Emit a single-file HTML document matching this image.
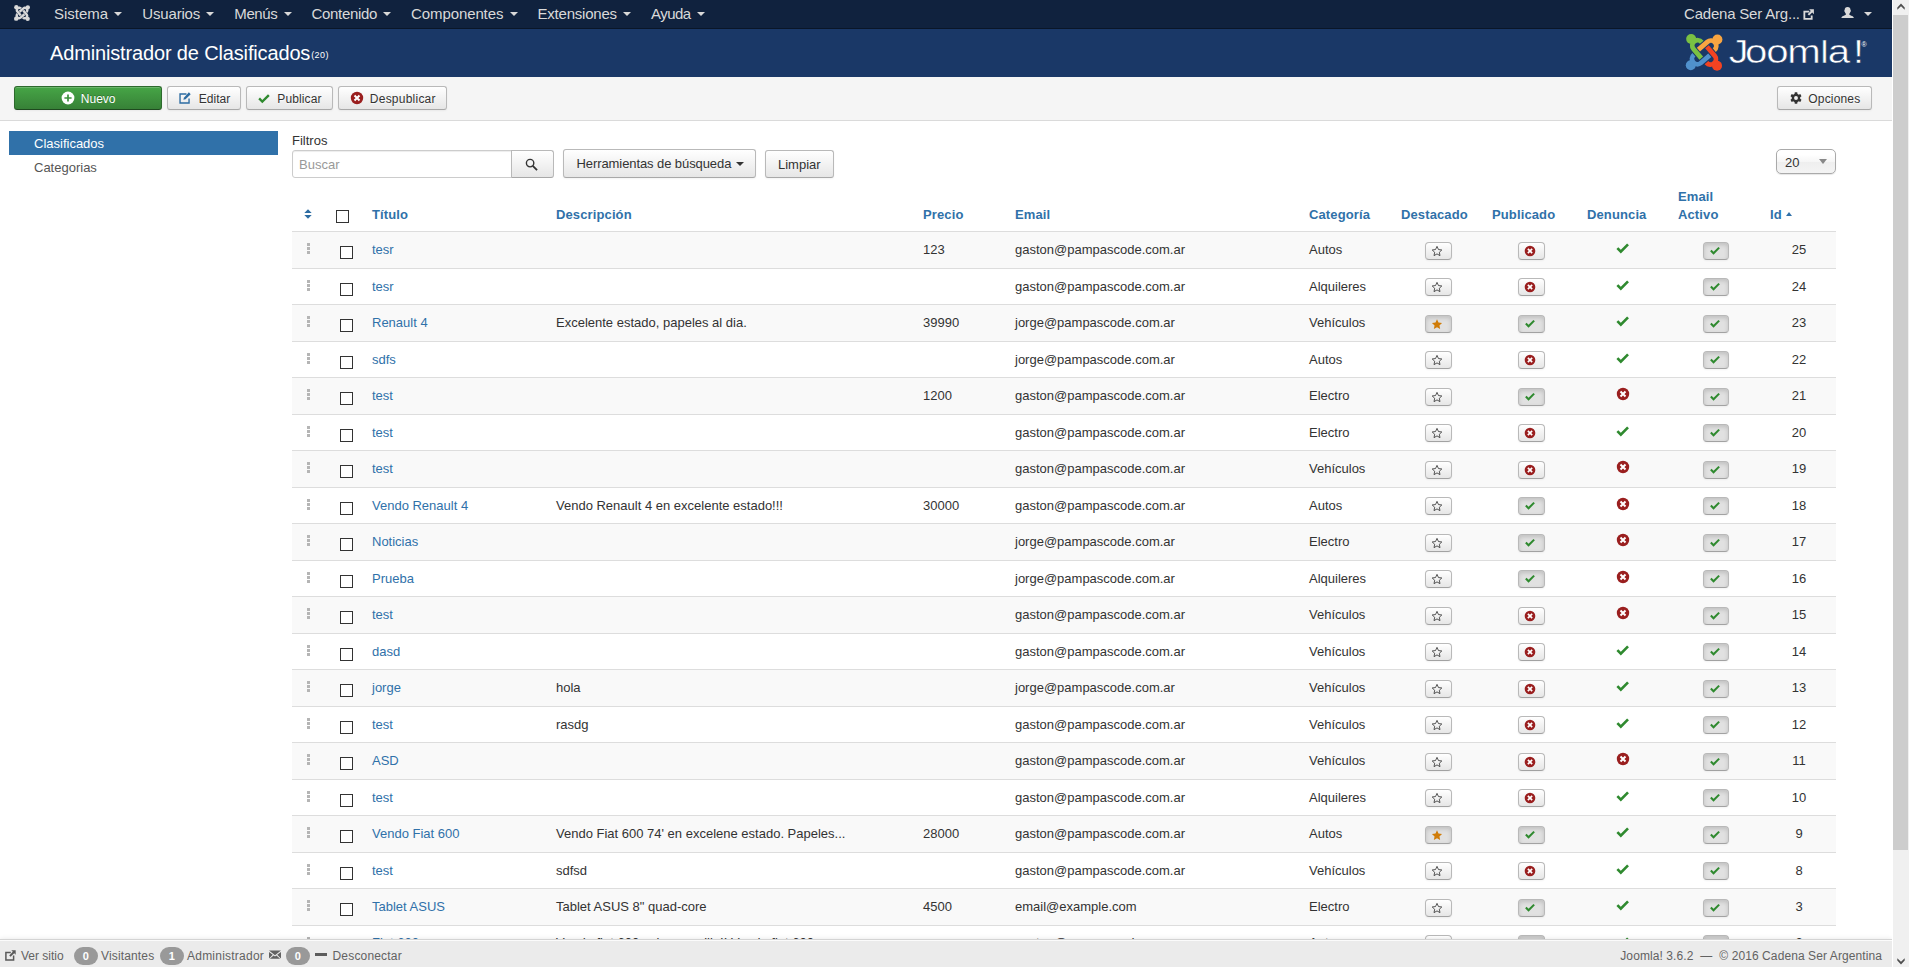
<!DOCTYPE html>
<html lang="es">
<head>
<meta charset="utf-8">
<title>Administrador de Clasificados - Cadena Ser Argentina - Administración</title>
<style>
*{box-sizing:border-box}
html,body{margin:0;padding:0}
body{width:1909px;height:967px;overflow:hidden;position:relative;background:#fff;font-family:"Liberation Sans",Arial,sans-serif;font-size:13px;line-height:18px;color:#333}
a{color:#3071a9;text-decoration:none}
svg{display:block}
#vp{position:absolute;left:0;top:0;width:1892px;height:967px;overflow:hidden;background:#fff}
/* navbar */
#nav{position:absolute;left:0;top:0;width:1892px;height:29px;background:#10223e;border-bottom:1px solid #0a1628;color:#d9d9d9;font-size:15px;line-height:18px}
#nav .logo{position:absolute;left:14px;top:5px;width:16px;height:16px}
#nav ul{list-style:none;margin:0;padding:0;position:absolute;left:44px;top:0;display:flex}
#nav li{padding:5px 10px 0 10px;white-space:nowrap}
#nav .car{display:inline-block;width:0;height:0;border-left:4px solid transparent;border-right:4px solid transparent;border-top:4px solid #d9d9d9;margin-left:2px;vertical-align:top;margin-top:7px}
#nav .site{position:absolute;left:1684px;top:5px;white-space:nowrap;letter-spacing:-0.2px}
#nav .ext{position:absolute;left:1802.8px;top:8.5px;width:11.5px;height:11px}
#nav .usr{position:absolute;left:1841px;top:6.6px;width:13.2px;height:11.8px}
#nav .car2{position:absolute;left:1864px;top:12px;width:0;height:0;border-left:4px solid transparent;border-right:4px solid transparent;border-top:4px solid #d9d9d9}
/* header */
#head{position:absolute;left:0;top:29px;width:1892px;height:48px;background:#1a3867;color:#fff}
#head h1{position:absolute;left:50px;top:6px;margin:0;font-size:20px;line-height:36px;font-weight:normal;white-space:nowrap}
#head h1 small{font-size:9px;font-weight:normal;letter-spacing:.4px;position:relative;top:-2px;margin-left:1px}
#head .jl{position:absolute;left:1685px;top:3px;width:186px;height:42px}
/* subhead */
#sub{position:absolute;left:0;top:77px;width:1892px;height:44px;background:#f5f5f5;border-bottom:1px solid #dadada}
.btn{position:absolute;height:24px;border:1px solid #b9b9b9;border-bottom-color:#a8a8a8;border-radius:3px;background:linear-gradient(#fff,#e6e6e6);font-size:12px;line-height:18px;padding:3px 10px 1px;color:#333;white-space:nowrap;box-shadow:inset 0 1px 0 rgba(255,255,255,.2),0 1px 2px rgba(0,0,0,.05);text-shadow:0 1px 1px rgba(255,255,255,.75)}
.btn .ic{display:inline-block;width:14px;height:14px;vertical-align:top;margin:1.3px 2.5px 0 .5px}
.btn.new .ic{margin-left:1px;margin-right:2px}
.btn.new{background:linear-gradient(#46a546,#378137);border-color:#2d6a2d;border-bottom-color:#1f4a1f;color:#fff;text-align:center;text-shadow:0 -1px 0 rgba(0,0,0,.25)}
/* sidebar */
#side{position:absolute;left:9px;top:131px;width:269px}
#side div{height:24px;padding:4px 25px 2px;color:#555}
#side div.on{background:#3071a9;color:#fff}
/* filters */
#flab{position:absolute;left:292px;top:132px}
#fin{position:absolute;left:292px;top:150px;width:220px;height:28px;border:1px solid #ccc;border-radius:3px 0 0 3px;background:#fff;box-shadow:inset 0 1px 1px rgba(0,0,0,.075);padding:5px 6px 3px;color:#999}
#fsb{position:absolute;left:511px;top:150px;width:43px;height:28px;border:1px solid #b9b9b9;border-bottom-color:#a8a8a8;border-radius:0 3px 3px 0;background:linear-gradient(#fff,#e6e6e6)}
#fsb svg{position:absolute;left:12.5px;top:7px;width:13px;height:13px}
.fb{position:absolute;top:150px;height:28px;border:1px solid #b9b9b9;border-bottom-color:#a8a8a8;border-radius:3px;background:linear-gradient(#fff,#e6e6e6);padding:5px 12px 3px;white-space:nowrap;box-shadow:0 1px 2px rgba(0,0,0,.05)}
.fb .car{display:inline-block;width:0;height:0;border-left:4px solid transparent;border-right:4px solid transparent;border-top:4px solid #333;vertical-align:top;margin:7px 0 0 1px}
#lim{position:absolute;left:1776px;top:149px;width:60px;height:25px;border:1px solid #aaa;border-radius:5px;background:linear-gradient(#fff 20%,#f6f6f6 50%,#eee 52%,#f4f4f4 100%);padding:4px 8px 0;box-shadow:0 1px 1px rgba(0,0,0,.1)}
#lim i{position:absolute;right:8.5px;top:9px;width:0;height:0;border-left:4px solid transparent;border-right:4px solid transparent;border-top:5.5px solid #888}
/* table */
#tb{position:absolute;left:292px;top:179px;width:1544px;border-collapse:collapse;table-layout:fixed}
#tb th{letter-spacing:.12px;padding:8px 8px 7px;text-align:left;vertical-align:bottom;font-weight:bold;color:#3071a9;height:52px;line-height:18px}
#tb td{padding:0 8px;height:36px;border-top:1px solid #ddd;vertical-align:top;white-space:nowrap;overflow:hidden}
#tb td{padding-top:9px}
#tb tbody tr:nth-child(odd) td{background:#f9f9f9;height:37px}
#tb td.ce{text-align:center}
#tb tbody tr:nth-child(even) .mb{margin-top:0}
#tb td.c11 .mb{width:26px}
#tb tbody tr:last-child td{padding-top:8px}
#tb tbody tr:last-child .mb{margin-top:1px}
#tb tbody tr:last-child .cb{margin-top:6px}
#tb tbody tr:last-child .hd{margin-top:3px}
#tb tbody tr:last-child .ic.big{margin-top:1px}
.cb{display:inline-block;width:13px;height:13px;border:1px solid #333;background:#fff;margin:5px 0 0 4px;vertical-align:top}
th .cb{margin:0 0 -4px 0;vertical-align:baseline}
.hd{display:inline-block;width:3px;margin:2px 0 0 7px;vertical-align:top}
.hd i{display:block;width:3px;height:3px;background:#b5b5b5;margin-bottom:1px}
.mb{display:inline-block;width:27px;height:18px;border:1px solid #b9b9b9;border-bottom-color:#a2a2a2;border-radius:4px;background:linear-gradient(#fff,#e6e6e6);box-shadow:0 1px 2px rgba(0,0,0,.05);vertical-align:top;margin-top:1px;position:relative}
.mb.act{background:#e1e1e1;box-shadow:inset 0 2px 4px rgba(0,0,0,.15),0 1px 2px rgba(0,0,0,.05)}
.mb .ic{position:absolute;left:5px;top:2px;width:12px;height:12px}
.ic.big{display:inline-block;width:14px;height:14px;vertical-align:top;margin:0 3px 0 0}
.ic.big.gr{width:15.4px;height:15.4px;margin:0 2.3px 0 -.7px}
.gr{color:#2f8a2f}.rd{color:#9a1f1f}.or{color:#d07c08}.dk{color:#333}.bl{color:#2d6ca2}
/* status */
#st{position:absolute;left:0;top:939px;width:1892px;height:28px;background:#ebebeb;border-top:1px solid #d4d4d4;color:#626262;font-size:12px;box-shadow:inset 0 1px 0 rgba(255,255,255,.8),0 0 5px rgba(0,0,0,.1)}
#st span{position:absolute;top:7px;white-space:nowrap}
#st .bd{top:7px;height:17.5px;min-width:22px;border-radius:9px;background:#999;color:#fff;font-size:11px;line-height:19px;overflow:hidden;text-align:center;padding:0 8.7px;font-weight:bold}
/* scrollbar */
#sb{position:absolute;left:1892px;top:0;width:17px;height:967px;background:#f0f0f0;border-left:1px solid #fff}
#sb .th{position:absolute;left:0;top:15px;width:15px;height:835px;background:#cdcdcd}
#sb svg{position:absolute;left:3.5px;width:8px;height:7px}
</style>
</head>
<body>
<div id="vp">
<div id="nav">
<svg class="logo" viewBox="5.4 3.3 37.4 37.4" style="overflow:visible"><g fill="#d9d9d9" stroke="#d9d9d9" stroke-width="5.8"><circle cx="10.9" cy="8.4" r="5.1" stroke="none"/><path d="M21.7 11.6 A5.1 5.1 0 1 0 13.3 18.6 L21.2 27.8" fill="none"/><g transform="rotate(90 24.1 22)"><circle cx="10.9" cy="8.4" r="5.1" stroke="none"/><path d="M21.7 11.6 A5.1 5.1 0 1 0 13.3 18.6 L21.2 27.8" fill="none"/></g><g transform="rotate(180 24.1 22)"><circle cx="10.9" cy="8.4" r="5.1" stroke="none"/><path d="M21.7 11.6 A5.1 5.1 0 1 0 13.3 18.6 L21.2 27.8" fill="none"/></g><g transform="rotate(270 24.1 22)"><circle cx="10.9" cy="8.4" r="5.1" stroke="none"/><path d="M21.7 11.6 A5.1 5.1 0 1 0 13.3 18.6 L21.2 27.8" fill="none"/></g></g></svg>
<ul><li><span style="letter-spacing:0px">Sistema</span> <span class="car"></span></li><li><span style="letter-spacing:-0.18px">Usuarios</span> <span class="car"></span></li><li><span style="letter-spacing:-0.38px">Menús</span> <span class="car"></span></li><li><span style="letter-spacing:-0.34px">Contenido</span> <span class="car"></span></li><li><span style="letter-spacing:-0.105px">Componentes</span> <span class="car"></span></li><li><span style="letter-spacing:-0.21px">Extensiones</span> <span class="car"></span></li><li><span style="letter-spacing:-0.54px">Ayuda</span> <span class="car"></span></li></ul>
<span class="site">Cadena Ser Arg...</span>
<svg class="ext" viewBox="0 0 12 12" style="color:#d9d9d9"><path d="M6.6 2.8 H1.2 V10.8 H9.2 V7.2" fill="none" stroke="currentColor" stroke-width="2"/><path d="M6.4 0.4 H11.6 V5.6 L9.8 3.8 L6.4 7.2 L4.8 5.6 L8.2 2.2 Z" fill="currentColor"/></svg>
<svg class="usr" viewBox="0 0 14 13" style="color:#d9d9d9"><path d="M7 0.1 C9.3 0.1 10.3 1.5 10.2 3.4 L10.6 3.6 L10.4 5.2 L10 5.4 C9.8 6.4 9.4 7 8.9 7.4 L8.9 8.4 C9.3 9 10.4 9.4 12.6 10.3 C13.5 10.8 13.9 11.6 14 12.9 L0 12.9 C0.1 11.6 0.5 10.8 1.4 10.3 C3.6 9.4 4.7 9 5.1 8.4 L5.1 7.4 C4.6 7 4.2 6.4 4 5.4 L3.6 5.2 L3.4 3.6 L3.8 3.4 C3.7 1.5 4.7 0.1 7 0.1 Z" fill="currentColor"/></svg>
<span class="car2"></span>
</div>
<div id="head">
<h1><span style="letter-spacing:-0.15px">Administrador de Clasificados</span><small>(20)</small></h1>
<svg class="jl" viewBox="0 0 186 42">
<g transform="translate(-5,-1.6) translate(24.1,22) scale(0.98) translate(-24.1,-22)" stroke-width="4.9"><g fill="#7ac143" stroke="#7ac143"><circle cx="10.9" cy="8.4" r="5.1" stroke="none"/><path d="M21.7 11.6 A5.1 5.1 0 1 0 13.3 18.6 L21.2 27.8" fill="none"/></g><g fill="#f9a541" stroke="#f9a541"><g transform="rotate(90 24.1 22)"><circle cx="10.9" cy="8.4" r="5.1" stroke="none"/><path d="M21.7 11.6 A5.1 5.1 0 1 0 13.3 18.6 L21.2 27.8" fill="none"/></g></g><g fill="#f44321" stroke="#f44321"><g transform="rotate(180 24.1 22)"><circle cx="10.9" cy="8.4" r="5.1" stroke="none"/><path d="M21.7 11.6 A5.1 5.1 0 1 0 13.3 18.6 L21.2 27.8" fill="none"/></g></g><g fill="#5091cd" stroke="#5091cd"><g transform="rotate(270 24.1 22)"><circle cx="10.9" cy="8.4" r="5.1" stroke="none"/><path d="M21.7 11.6 A5.1 5.1 0 1 0 13.3 18.6 L21.2 27.8" fill="none"/></g></g></g>
<text transform="scale(1.22,1)" x="35.9 49.1 66.6 83.8 110.8 117.1 137.8" y="31.1" font-family="Liberation Sans, sans-serif" font-size="33" fill="#fff" stroke="#1a3867" stroke-width="0.5"><tspan font-size="32.5">J</tspan>oom<tspan font-size="31">l</tspan>a<tspan font-size="32.5">!</tspan></text>
<text x="176.5" y="15" font-family="Liberation Sans, sans-serif" font-size="7" fill="#fff">®</text>
</svg>
</div>
<div id="sub">
<div class="btn new" style="left:14px;top:9px;width:148px"><svg class="ic" viewBox="0 0 14 14" style="color:#fff"><circle cx="7" cy="7" r="6.4" fill="currentColor"/><path d="M7 3.4 V10.6 M3.4 7 H10.6" stroke="#3d923d" stroke-width="1.7"/></svg> Nuevo</div>
<div class="btn" style="left:167px;top:9px;padding-left:10.5px"><svg class="ic bl" viewBox="0 0 14 14" style="margin-left:-.5px;margin-right:3.5px"><g transform="translate(7 7) scale(.92) translate(-7 -7)"><path d="M8.6 2.6 H1.6 V12.4 H11.4 V7.6" fill="none" stroke="currentColor" stroke-width="1.5"/><path d="M5.2 9 L5.8 6.6 L11.2 0.8 L13.2 2.8 L7.6 8.4 Z" fill="currentColor"/></g></svg> Editar</div>
<div class="btn" style="left:246px;top:9px"><svg class="ic gr" viewBox="0 0 14 14" style="margin-top:2.2px;margin-left:0;margin-right:3px"><path d="M1.3 7.3 L3 5.6 L5.3 7.9 L11 2.2 L12.7 3.9 L5.3 11.3 Z" fill="currentColor"/></svg> <span style="letter-spacing:.1px">Publicar</span></div>
<div class="btn" style="left:338px;top:9px;padding-left:10.5px"><svg class="ic rd" viewBox="0 0 14 14"><circle cx="7" cy="7" r="6.2" fill="currentColor"/><path d="M4.5 4.5 L9.5 9.5 M9.5 4.5 L4.5 9.5" stroke="#fff" stroke-width="2" stroke-linecap="butt"/></svg> <span style="letter-spacing:.23px">Despublicar</span></div>
<div class="btn" style="left:1777px;top:9px;padding-right:11px"><svg class="ic dk" viewBox="0 0 14 14"><g transform="translate(7 7) scale(.93) translate(-7 -7)"><g fill="currentColor"><rect x="5.5" y="0.9" width="3" height="3" rx="0.5" transform="rotate(0 7 7)"/><rect x="5.5" y="0.9" width="3" height="3" rx="0.5" transform="rotate(60 7 7)"/><rect x="5.5" y="0.9" width="3" height="3" rx="0.5" transform="rotate(120 7 7)"/><rect x="5.5" y="0.9" width="3" height="3" rx="0.5" transform="rotate(180 7 7)"/><rect x="5.5" y="0.9" width="3" height="3" rx="0.5" transform="rotate(240 7 7)"/><rect x="5.5" y="0.9" width="3" height="3" rx="0.5" transform="rotate(300 7 7)"/></g><circle cx="7" cy="7" r="3.35" fill="none" stroke="currentColor" stroke-width="2.5"/></g></svg> <span style="letter-spacing:.16px">Opciones</span></div>
</div>
<div id="side"><div class="on">Clasificados</div><div>Categorias</div></div>
<div id="flab">Filtros</div>
<div id="fin">Buscar</div>
<div id="fsb"><svg viewBox="0 0 14 14" class="dk"><circle cx="5.5" cy="5.5" r="4" fill="none" stroke="currentColor" stroke-width="1.5"/><path d="M8.4 8.4 L13 13" stroke="currentColor" stroke-width="2"/></svg></div>
<div class="fb" style="left:563px;top:149px;height:29px;padding-top:5px;padding-left:12.5px;padding-right:11.3px"><span style="letter-spacing:-0.085px">Herramientas de búsqueda</span> <span class="car"></span></div>
<div class="fb" style="left:765px">Limpiar</div>
<div id="lim">20<i></i></div>
<table id="tb">
<colgroup><col style="width:36px"><col style="width:36px"><col style="width:184px"><col style="width:367px"><col style="width:92px"><col style="width:294px"><col style="width:92px"><col style="width:91px"><col style="width:95px"><col style="width:91px"><col style="width:92px"><col style="width:74px"></colgroup>
<thead><tr>
<th><svg viewBox="0 0 8 10" style="width:8px;height:10px;margin:0 0 5px 4px" class="bl"><path d="M0.3 4 L4 0.2 L7.7 4 Z M0.3 6 L4 9.8 L7.7 6 Z" fill="currentColor"/></svg></th>
<th><span class="cb"></span></th>
<th>Título</th><th>Descripción</th><th>Precio</th><th>Email</th><th>Categoría</th><th>Destacado</th><th>Publicado</th><th>Denuncia</th><th>Email Activo</th><th>Id <span style="display:inline-block;width:0;height:0;border-left:3.5px solid transparent;border-right:3.5px solid transparent;border-bottom:4px solid #3071a9;vertical-align:top;margin-top:6px"></span></th>
</tr></thead>
<tbody>
<tr><td class="c1"><span class="hd"><i></i><i></i><i></i></span></td><td class="c2"><span class="cb"></span></td><td><a>tesr</a></td><td></td><td>123</td><td>gaston@pampascode.com.ar</td><td>Autos</td><td class="ce"><span class="mb"><svg class="ic dk" viewBox="0 0 14 14"><path d="M7 1.6 L8.7 5.3 L12.6 5.8 L9.7 8.5 L10.5 12.4 L7 10.4 L3.5 12.4 L4.3 8.5 L1.4 5.8 L5.3 5.3 Z" fill="none" stroke="currentColor" stroke-width="0.95"/></svg></span></td><td class="ce"><span class="mb"><svg class="ic rd" viewBox="0 0 14 14"><circle cx="7" cy="7" r="6.2" fill="currentColor"/><path d="M4.5 4.5 L9.5 9.5 M9.5 4.5 L4.5 9.5" stroke="#fff" stroke-width="2" stroke-linecap="butt"/></svg></span></td><td class="ce dn"><svg class="ic gr big" viewBox="0 0 14 14"><path d="M1.3 7.3 L3 5.6 L5.3 7.9 L11 2.2 L12.7 3.9 L5.3 11.3 Z" fill="currentColor"/></svg></td><td class="ce c11"><span class="mb act"><svg class="ic gr" viewBox="0 0 14 14"><path d="M1.3 7.3 L3 5.6 L5.3 7.9 L11 2.2 L12.7 3.9 L5.3 11.3 Z" fill="currentColor"/></svg></span></td><td class="ce">25</td></tr>
<tr><td class="c1"><span class="hd"><i></i><i></i><i></i></span></td><td class="c2"><span class="cb"></span></td><td><a>tesr</a></td><td></td><td></td><td>gaston@pampascode.com.ar</td><td>Alquileres</td><td class="ce"><span class="mb"><svg class="ic dk" viewBox="0 0 14 14"><path d="M7 1.6 L8.7 5.3 L12.6 5.8 L9.7 8.5 L10.5 12.4 L7 10.4 L3.5 12.4 L4.3 8.5 L1.4 5.8 L5.3 5.3 Z" fill="none" stroke="currentColor" stroke-width="0.95"/></svg></span></td><td class="ce"><span class="mb"><svg class="ic rd" viewBox="0 0 14 14"><circle cx="7" cy="7" r="6.2" fill="currentColor"/><path d="M4.5 4.5 L9.5 9.5 M9.5 4.5 L4.5 9.5" stroke="#fff" stroke-width="2" stroke-linecap="butt"/></svg></span></td><td class="ce dn"><svg class="ic gr big" viewBox="0 0 14 14"><path d="M1.3 7.3 L3 5.6 L5.3 7.9 L11 2.2 L12.7 3.9 L5.3 11.3 Z" fill="currentColor"/></svg></td><td class="ce c11"><span class="mb act"><svg class="ic gr" viewBox="0 0 14 14"><path d="M1.3 7.3 L3 5.6 L5.3 7.9 L11 2.2 L12.7 3.9 L5.3 11.3 Z" fill="currentColor"/></svg></span></td><td class="ce">24</td></tr>
<tr><td class="c1"><span class="hd"><i></i><i></i><i></i></span></td><td class="c2"><span class="cb"></span></td><td><a>Renault 4</a></td><td>Excelente estado, papeles al dia.</td><td>39990</td><td>jorge@pampascode.com.ar</td><td>Vehículos</td><td class="ce"><span class="mb act"><svg class="ic or" viewBox="0 0 14 14"><path transform="translate(7 7.3) scale(0.92) translate(-7 -7)" d="M7 0.8 L8.9 4.9 L13.4 5.4 L10.1 8.5 L11 13 L7 10.7 L3 13 L3.9 8.5 L0.6 5.4 L5.1 4.9 Z" fill="currentColor"/></svg></span></td><td class="ce"><span class="mb act"><svg class="ic gr" viewBox="0 0 14 14"><path d="M1.3 7.3 L3 5.6 L5.3 7.9 L11 2.2 L12.7 3.9 L5.3 11.3 Z" fill="currentColor"/></svg></span></td><td class="ce dn"><svg class="ic gr big" viewBox="0 0 14 14"><path d="M1.3 7.3 L3 5.6 L5.3 7.9 L11 2.2 L12.7 3.9 L5.3 11.3 Z" fill="currentColor"/></svg></td><td class="ce c11"><span class="mb act"><svg class="ic gr" viewBox="0 0 14 14"><path d="M1.3 7.3 L3 5.6 L5.3 7.9 L11 2.2 L12.7 3.9 L5.3 11.3 Z" fill="currentColor"/></svg></span></td><td class="ce">23</td></tr>
<tr><td class="c1"><span class="hd"><i></i><i></i><i></i></span></td><td class="c2"><span class="cb"></span></td><td><a>sdfs</a></td><td></td><td></td><td>jorge@pampascode.com.ar</td><td>Autos</td><td class="ce"><span class="mb"><svg class="ic dk" viewBox="0 0 14 14"><path d="M7 1.6 L8.7 5.3 L12.6 5.8 L9.7 8.5 L10.5 12.4 L7 10.4 L3.5 12.4 L4.3 8.5 L1.4 5.8 L5.3 5.3 Z" fill="none" stroke="currentColor" stroke-width="0.95"/></svg></span></td><td class="ce"><span class="mb"><svg class="ic rd" viewBox="0 0 14 14"><circle cx="7" cy="7" r="6.2" fill="currentColor"/><path d="M4.5 4.5 L9.5 9.5 M9.5 4.5 L4.5 9.5" stroke="#fff" stroke-width="2" stroke-linecap="butt"/></svg></span></td><td class="ce dn"><svg class="ic gr big" viewBox="0 0 14 14"><path d="M1.3 7.3 L3 5.6 L5.3 7.9 L11 2.2 L12.7 3.9 L5.3 11.3 Z" fill="currentColor"/></svg></td><td class="ce c11"><span class="mb act"><svg class="ic gr" viewBox="0 0 14 14"><path d="M1.3 7.3 L3 5.6 L5.3 7.9 L11 2.2 L12.7 3.9 L5.3 11.3 Z" fill="currentColor"/></svg></span></td><td class="ce">22</td></tr>
<tr><td class="c1"><span class="hd"><i></i><i></i><i></i></span></td><td class="c2"><span class="cb"></span></td><td><a>test</a></td><td></td><td>1200</td><td>gaston@pampascode.com.ar</td><td>Electro</td><td class="ce"><span class="mb"><svg class="ic dk" viewBox="0 0 14 14"><path d="M7 1.6 L8.7 5.3 L12.6 5.8 L9.7 8.5 L10.5 12.4 L7 10.4 L3.5 12.4 L4.3 8.5 L1.4 5.8 L5.3 5.3 Z" fill="none" stroke="currentColor" stroke-width="0.95"/></svg></span></td><td class="ce"><span class="mb act"><svg class="ic gr" viewBox="0 0 14 14"><path d="M1.3 7.3 L3 5.6 L5.3 7.9 L11 2.2 L12.7 3.9 L5.3 11.3 Z" fill="currentColor"/></svg></span></td><td class="ce dn"><svg class="ic rd big" viewBox="0 0 14 14"><circle cx="7" cy="7" r="6.2" fill="currentColor"/><path d="M4.5 4.5 L9.5 9.5 M9.5 4.5 L4.5 9.5" stroke="#fff" stroke-width="2" stroke-linecap="butt"/></svg></td><td class="ce c11"><span class="mb act"><svg class="ic gr" viewBox="0 0 14 14"><path d="M1.3 7.3 L3 5.6 L5.3 7.9 L11 2.2 L12.7 3.9 L5.3 11.3 Z" fill="currentColor"/></svg></span></td><td class="ce">21</td></tr>
<tr><td class="c1"><span class="hd"><i></i><i></i><i></i></span></td><td class="c2"><span class="cb"></span></td><td><a>test</a></td><td></td><td></td><td>gaston@pampascode.com.ar</td><td>Electro</td><td class="ce"><span class="mb"><svg class="ic dk" viewBox="0 0 14 14"><path d="M7 1.6 L8.7 5.3 L12.6 5.8 L9.7 8.5 L10.5 12.4 L7 10.4 L3.5 12.4 L4.3 8.5 L1.4 5.8 L5.3 5.3 Z" fill="none" stroke="currentColor" stroke-width="0.95"/></svg></span></td><td class="ce"><span class="mb"><svg class="ic rd" viewBox="0 0 14 14"><circle cx="7" cy="7" r="6.2" fill="currentColor"/><path d="M4.5 4.5 L9.5 9.5 M9.5 4.5 L4.5 9.5" stroke="#fff" stroke-width="2" stroke-linecap="butt"/></svg></span></td><td class="ce dn"><svg class="ic gr big" viewBox="0 0 14 14"><path d="M1.3 7.3 L3 5.6 L5.3 7.9 L11 2.2 L12.7 3.9 L5.3 11.3 Z" fill="currentColor"/></svg></td><td class="ce c11"><span class="mb act"><svg class="ic gr" viewBox="0 0 14 14"><path d="M1.3 7.3 L3 5.6 L5.3 7.9 L11 2.2 L12.7 3.9 L5.3 11.3 Z" fill="currentColor"/></svg></span></td><td class="ce">20</td></tr>
<tr><td class="c1"><span class="hd"><i></i><i></i><i></i></span></td><td class="c2"><span class="cb"></span></td><td><a>test</a></td><td></td><td></td><td>gaston@pampascode.com.ar</td><td>Vehículos</td><td class="ce"><span class="mb"><svg class="ic dk" viewBox="0 0 14 14"><path d="M7 1.6 L8.7 5.3 L12.6 5.8 L9.7 8.5 L10.5 12.4 L7 10.4 L3.5 12.4 L4.3 8.5 L1.4 5.8 L5.3 5.3 Z" fill="none" stroke="currentColor" stroke-width="0.95"/></svg></span></td><td class="ce"><span class="mb"><svg class="ic rd" viewBox="0 0 14 14"><circle cx="7" cy="7" r="6.2" fill="currentColor"/><path d="M4.5 4.5 L9.5 9.5 M9.5 4.5 L4.5 9.5" stroke="#fff" stroke-width="2" stroke-linecap="butt"/></svg></span></td><td class="ce dn"><svg class="ic rd big" viewBox="0 0 14 14"><circle cx="7" cy="7" r="6.2" fill="currentColor"/><path d="M4.5 4.5 L9.5 9.5 M9.5 4.5 L4.5 9.5" stroke="#fff" stroke-width="2" stroke-linecap="butt"/></svg></td><td class="ce c11"><span class="mb act"><svg class="ic gr" viewBox="0 0 14 14"><path d="M1.3 7.3 L3 5.6 L5.3 7.9 L11 2.2 L12.7 3.9 L5.3 11.3 Z" fill="currentColor"/></svg></span></td><td class="ce">19</td></tr>
<tr><td class="c1"><span class="hd"><i></i><i></i><i></i></span></td><td class="c2"><span class="cb"></span></td><td><a>Vendo Renault 4</a></td><td>Vendo Renault 4 en excelente estado!!!</td><td>30000</td><td>gaston@pampascode.com.ar</td><td>Autos</td><td class="ce"><span class="mb"><svg class="ic dk" viewBox="0 0 14 14"><path d="M7 1.6 L8.7 5.3 L12.6 5.8 L9.7 8.5 L10.5 12.4 L7 10.4 L3.5 12.4 L4.3 8.5 L1.4 5.8 L5.3 5.3 Z" fill="none" stroke="currentColor" stroke-width="0.95"/></svg></span></td><td class="ce"><span class="mb act"><svg class="ic gr" viewBox="0 0 14 14"><path d="M1.3 7.3 L3 5.6 L5.3 7.9 L11 2.2 L12.7 3.9 L5.3 11.3 Z" fill="currentColor"/></svg></span></td><td class="ce dn"><svg class="ic rd big" viewBox="0 0 14 14"><circle cx="7" cy="7" r="6.2" fill="currentColor"/><path d="M4.5 4.5 L9.5 9.5 M9.5 4.5 L4.5 9.5" stroke="#fff" stroke-width="2" stroke-linecap="butt"/></svg></td><td class="ce c11"><span class="mb act"><svg class="ic gr" viewBox="0 0 14 14"><path d="M1.3 7.3 L3 5.6 L5.3 7.9 L11 2.2 L12.7 3.9 L5.3 11.3 Z" fill="currentColor"/></svg></span></td><td class="ce">18</td></tr>
<tr><td class="c1"><span class="hd"><i></i><i></i><i></i></span></td><td class="c2"><span class="cb"></span></td><td><a>Noticias</a></td><td></td><td></td><td>jorge@pampascode.com.ar</td><td>Electro</td><td class="ce"><span class="mb"><svg class="ic dk" viewBox="0 0 14 14"><path d="M7 1.6 L8.7 5.3 L12.6 5.8 L9.7 8.5 L10.5 12.4 L7 10.4 L3.5 12.4 L4.3 8.5 L1.4 5.8 L5.3 5.3 Z" fill="none" stroke="currentColor" stroke-width="0.95"/></svg></span></td><td class="ce"><span class="mb act"><svg class="ic gr" viewBox="0 0 14 14"><path d="M1.3 7.3 L3 5.6 L5.3 7.9 L11 2.2 L12.7 3.9 L5.3 11.3 Z" fill="currentColor"/></svg></span></td><td class="ce dn"><svg class="ic rd big" viewBox="0 0 14 14"><circle cx="7" cy="7" r="6.2" fill="currentColor"/><path d="M4.5 4.5 L9.5 9.5 M9.5 4.5 L4.5 9.5" stroke="#fff" stroke-width="2" stroke-linecap="butt"/></svg></td><td class="ce c11"><span class="mb act"><svg class="ic gr" viewBox="0 0 14 14"><path d="M1.3 7.3 L3 5.6 L5.3 7.9 L11 2.2 L12.7 3.9 L5.3 11.3 Z" fill="currentColor"/></svg></span></td><td class="ce">17</td></tr>
<tr><td class="c1"><span class="hd"><i></i><i></i><i></i></span></td><td class="c2"><span class="cb"></span></td><td><a>Prueba</a></td><td></td><td></td><td>jorge@pampascode.com.ar</td><td>Alquileres</td><td class="ce"><span class="mb"><svg class="ic dk" viewBox="0 0 14 14"><path d="M7 1.6 L8.7 5.3 L12.6 5.8 L9.7 8.5 L10.5 12.4 L7 10.4 L3.5 12.4 L4.3 8.5 L1.4 5.8 L5.3 5.3 Z" fill="none" stroke="currentColor" stroke-width="0.95"/></svg></span></td><td class="ce"><span class="mb act"><svg class="ic gr" viewBox="0 0 14 14"><path d="M1.3 7.3 L3 5.6 L5.3 7.9 L11 2.2 L12.7 3.9 L5.3 11.3 Z" fill="currentColor"/></svg></span></td><td class="ce dn"><svg class="ic rd big" viewBox="0 0 14 14"><circle cx="7" cy="7" r="6.2" fill="currentColor"/><path d="M4.5 4.5 L9.5 9.5 M9.5 4.5 L4.5 9.5" stroke="#fff" stroke-width="2" stroke-linecap="butt"/></svg></td><td class="ce c11"><span class="mb act"><svg class="ic gr" viewBox="0 0 14 14"><path d="M1.3 7.3 L3 5.6 L5.3 7.9 L11 2.2 L12.7 3.9 L5.3 11.3 Z" fill="currentColor"/></svg></span></td><td class="ce">16</td></tr>
<tr><td class="c1"><span class="hd"><i></i><i></i><i></i></span></td><td class="c2"><span class="cb"></span></td><td><a>test</a></td><td></td><td></td><td>gaston@pampascode.com.ar</td><td>Vehículos</td><td class="ce"><span class="mb"><svg class="ic dk" viewBox="0 0 14 14"><path d="M7 1.6 L8.7 5.3 L12.6 5.8 L9.7 8.5 L10.5 12.4 L7 10.4 L3.5 12.4 L4.3 8.5 L1.4 5.8 L5.3 5.3 Z" fill="none" stroke="currentColor" stroke-width="0.95"/></svg></span></td><td class="ce"><span class="mb"><svg class="ic rd" viewBox="0 0 14 14"><circle cx="7" cy="7" r="6.2" fill="currentColor"/><path d="M4.5 4.5 L9.5 9.5 M9.5 4.5 L4.5 9.5" stroke="#fff" stroke-width="2" stroke-linecap="butt"/></svg></span></td><td class="ce dn"><svg class="ic rd big" viewBox="0 0 14 14"><circle cx="7" cy="7" r="6.2" fill="currentColor"/><path d="M4.5 4.5 L9.5 9.5 M9.5 4.5 L4.5 9.5" stroke="#fff" stroke-width="2" stroke-linecap="butt"/></svg></td><td class="ce c11"><span class="mb act"><svg class="ic gr" viewBox="0 0 14 14"><path d="M1.3 7.3 L3 5.6 L5.3 7.9 L11 2.2 L12.7 3.9 L5.3 11.3 Z" fill="currentColor"/></svg></span></td><td class="ce">15</td></tr>
<tr><td class="c1"><span class="hd"><i></i><i></i><i></i></span></td><td class="c2"><span class="cb"></span></td><td><a>dasd</a></td><td></td><td></td><td>gaston@pampascode.com.ar</td><td>Vehículos</td><td class="ce"><span class="mb"><svg class="ic dk" viewBox="0 0 14 14"><path d="M7 1.6 L8.7 5.3 L12.6 5.8 L9.7 8.5 L10.5 12.4 L7 10.4 L3.5 12.4 L4.3 8.5 L1.4 5.8 L5.3 5.3 Z" fill="none" stroke="currentColor" stroke-width="0.95"/></svg></span></td><td class="ce"><span class="mb"><svg class="ic rd" viewBox="0 0 14 14"><circle cx="7" cy="7" r="6.2" fill="currentColor"/><path d="M4.5 4.5 L9.5 9.5 M9.5 4.5 L4.5 9.5" stroke="#fff" stroke-width="2" stroke-linecap="butt"/></svg></span></td><td class="ce dn"><svg class="ic gr big" viewBox="0 0 14 14"><path d="M1.3 7.3 L3 5.6 L5.3 7.9 L11 2.2 L12.7 3.9 L5.3 11.3 Z" fill="currentColor"/></svg></td><td class="ce c11"><span class="mb act"><svg class="ic gr" viewBox="0 0 14 14"><path d="M1.3 7.3 L3 5.6 L5.3 7.9 L11 2.2 L12.7 3.9 L5.3 11.3 Z" fill="currentColor"/></svg></span></td><td class="ce">14</td></tr>
<tr><td class="c1"><span class="hd"><i></i><i></i><i></i></span></td><td class="c2"><span class="cb"></span></td><td><a>jorge</a></td><td>hola</td><td></td><td>jorge@pampascode.com.ar</td><td>Vehículos</td><td class="ce"><span class="mb"><svg class="ic dk" viewBox="0 0 14 14"><path d="M7 1.6 L8.7 5.3 L12.6 5.8 L9.7 8.5 L10.5 12.4 L7 10.4 L3.5 12.4 L4.3 8.5 L1.4 5.8 L5.3 5.3 Z" fill="none" stroke="currentColor" stroke-width="0.95"/></svg></span></td><td class="ce"><span class="mb"><svg class="ic rd" viewBox="0 0 14 14"><circle cx="7" cy="7" r="6.2" fill="currentColor"/><path d="M4.5 4.5 L9.5 9.5 M9.5 4.5 L4.5 9.5" stroke="#fff" stroke-width="2" stroke-linecap="butt"/></svg></span></td><td class="ce dn"><svg class="ic gr big" viewBox="0 0 14 14"><path d="M1.3 7.3 L3 5.6 L5.3 7.9 L11 2.2 L12.7 3.9 L5.3 11.3 Z" fill="currentColor"/></svg></td><td class="ce c11"><span class="mb act"><svg class="ic gr" viewBox="0 0 14 14"><path d="M1.3 7.3 L3 5.6 L5.3 7.9 L11 2.2 L12.7 3.9 L5.3 11.3 Z" fill="currentColor"/></svg></span></td><td class="ce">13</td></tr>
<tr><td class="c1"><span class="hd"><i></i><i></i><i></i></span></td><td class="c2"><span class="cb"></span></td><td><a>test</a></td><td>rasdg</td><td></td><td>gaston@pampascode.com.ar</td><td>Vehículos</td><td class="ce"><span class="mb"><svg class="ic dk" viewBox="0 0 14 14"><path d="M7 1.6 L8.7 5.3 L12.6 5.8 L9.7 8.5 L10.5 12.4 L7 10.4 L3.5 12.4 L4.3 8.5 L1.4 5.8 L5.3 5.3 Z" fill="none" stroke="currentColor" stroke-width="0.95"/></svg></span></td><td class="ce"><span class="mb"><svg class="ic rd" viewBox="0 0 14 14"><circle cx="7" cy="7" r="6.2" fill="currentColor"/><path d="M4.5 4.5 L9.5 9.5 M9.5 4.5 L4.5 9.5" stroke="#fff" stroke-width="2" stroke-linecap="butt"/></svg></span></td><td class="ce dn"><svg class="ic gr big" viewBox="0 0 14 14"><path d="M1.3 7.3 L3 5.6 L5.3 7.9 L11 2.2 L12.7 3.9 L5.3 11.3 Z" fill="currentColor"/></svg></td><td class="ce c11"><span class="mb act"><svg class="ic gr" viewBox="0 0 14 14"><path d="M1.3 7.3 L3 5.6 L5.3 7.9 L11 2.2 L12.7 3.9 L5.3 11.3 Z" fill="currentColor"/></svg></span></td><td class="ce">12</td></tr>
<tr><td class="c1"><span class="hd"><i></i><i></i><i></i></span></td><td class="c2"><span class="cb"></span></td><td><a>ASD</a></td><td></td><td></td><td>gaston@pampascode.com.ar</td><td>Vehículos</td><td class="ce"><span class="mb"><svg class="ic dk" viewBox="0 0 14 14"><path d="M7 1.6 L8.7 5.3 L12.6 5.8 L9.7 8.5 L10.5 12.4 L7 10.4 L3.5 12.4 L4.3 8.5 L1.4 5.8 L5.3 5.3 Z" fill="none" stroke="currentColor" stroke-width="0.95"/></svg></span></td><td class="ce"><span class="mb"><svg class="ic rd" viewBox="0 0 14 14"><circle cx="7" cy="7" r="6.2" fill="currentColor"/><path d="M4.5 4.5 L9.5 9.5 M9.5 4.5 L4.5 9.5" stroke="#fff" stroke-width="2" stroke-linecap="butt"/></svg></span></td><td class="ce dn"><svg class="ic rd big" viewBox="0 0 14 14"><circle cx="7" cy="7" r="6.2" fill="currentColor"/><path d="M4.5 4.5 L9.5 9.5 M9.5 4.5 L4.5 9.5" stroke="#fff" stroke-width="2" stroke-linecap="butt"/></svg></td><td class="ce c11"><span class="mb act"><svg class="ic gr" viewBox="0 0 14 14"><path d="M1.3 7.3 L3 5.6 L5.3 7.9 L11 2.2 L12.7 3.9 L5.3 11.3 Z" fill="currentColor"/></svg></span></td><td class="ce">11</td></tr>
<tr><td class="c1"><span class="hd"><i></i><i></i><i></i></span></td><td class="c2"><span class="cb"></span></td><td><a>test</a></td><td></td><td></td><td>gaston@pampascode.com.ar</td><td>Alquileres</td><td class="ce"><span class="mb"><svg class="ic dk" viewBox="0 0 14 14"><path d="M7 1.6 L8.7 5.3 L12.6 5.8 L9.7 8.5 L10.5 12.4 L7 10.4 L3.5 12.4 L4.3 8.5 L1.4 5.8 L5.3 5.3 Z" fill="none" stroke="currentColor" stroke-width="0.95"/></svg></span></td><td class="ce"><span class="mb"><svg class="ic rd" viewBox="0 0 14 14"><circle cx="7" cy="7" r="6.2" fill="currentColor"/><path d="M4.5 4.5 L9.5 9.5 M9.5 4.5 L4.5 9.5" stroke="#fff" stroke-width="2" stroke-linecap="butt"/></svg></span></td><td class="ce dn"><svg class="ic gr big" viewBox="0 0 14 14"><path d="M1.3 7.3 L3 5.6 L5.3 7.9 L11 2.2 L12.7 3.9 L5.3 11.3 Z" fill="currentColor"/></svg></td><td class="ce c11"><span class="mb act"><svg class="ic gr" viewBox="0 0 14 14"><path d="M1.3 7.3 L3 5.6 L5.3 7.9 L11 2.2 L12.7 3.9 L5.3 11.3 Z" fill="currentColor"/></svg></span></td><td class="ce">10</td></tr>
<tr><td class="c1"><span class="hd"><i></i><i></i><i></i></span></td><td class="c2"><span class="cb"></span></td><td><a>Vendo Fiat 600</a></td><td>Vendo Fiat 600 74' en excelene estado. Papeles...</td><td>28000</td><td>gaston@pampascode.com.ar</td><td>Autos</td><td class="ce"><span class="mb act"><svg class="ic or" viewBox="0 0 14 14"><path transform="translate(7 7.3) scale(0.92) translate(-7 -7)" d="M7 0.8 L8.9 4.9 L13.4 5.4 L10.1 8.5 L11 13 L7 10.7 L3 13 L3.9 8.5 L0.6 5.4 L5.1 4.9 Z" fill="currentColor"/></svg></span></td><td class="ce"><span class="mb act"><svg class="ic gr" viewBox="0 0 14 14"><path d="M1.3 7.3 L3 5.6 L5.3 7.9 L11 2.2 L12.7 3.9 L5.3 11.3 Z" fill="currentColor"/></svg></span></td><td class="ce dn"><svg class="ic gr big" viewBox="0 0 14 14"><path d="M1.3 7.3 L3 5.6 L5.3 7.9 L11 2.2 L12.7 3.9 L5.3 11.3 Z" fill="currentColor"/></svg></td><td class="ce c11"><span class="mb act"><svg class="ic gr" viewBox="0 0 14 14"><path d="M1.3 7.3 L3 5.6 L5.3 7.9 L11 2.2 L12.7 3.9 L5.3 11.3 Z" fill="currentColor"/></svg></span></td><td class="ce">9</td></tr>
<tr><td class="c1"><span class="hd"><i></i><i></i><i></i></span></td><td class="c2"><span class="cb"></span></td><td><a>test</a></td><td>sdfsd</td><td></td><td>gaston@pampascode.com.ar</td><td>Vehículos</td><td class="ce"><span class="mb"><svg class="ic dk" viewBox="0 0 14 14"><path d="M7 1.6 L8.7 5.3 L12.6 5.8 L9.7 8.5 L10.5 12.4 L7 10.4 L3.5 12.4 L4.3 8.5 L1.4 5.8 L5.3 5.3 Z" fill="none" stroke="currentColor" stroke-width="0.95"/></svg></span></td><td class="ce"><span class="mb"><svg class="ic rd" viewBox="0 0 14 14"><circle cx="7" cy="7" r="6.2" fill="currentColor"/><path d="M4.5 4.5 L9.5 9.5 M9.5 4.5 L4.5 9.5" stroke="#fff" stroke-width="2" stroke-linecap="butt"/></svg></span></td><td class="ce dn"><svg class="ic gr big" viewBox="0 0 14 14"><path d="M1.3 7.3 L3 5.6 L5.3 7.9 L11 2.2 L12.7 3.9 L5.3 11.3 Z" fill="currentColor"/></svg></td><td class="ce c11"><span class="mb act"><svg class="ic gr" viewBox="0 0 14 14"><path d="M1.3 7.3 L3 5.6 L5.3 7.9 L11 2.2 L12.7 3.9 L5.3 11.3 Z" fill="currentColor"/></svg></span></td><td class="ce">8</td></tr>
<tr><td class="c1"><span class="hd"><i></i><i></i><i></i></span></td><td class="c2"><span class="cb"></span></td><td><a>Tablet ASUS</a></td><td>Tablet ASUS 8&quot; quad-core</td><td>4500</td><td>email@example.com</td><td>Electro</td><td class="ce"><span class="mb"><svg class="ic dk" viewBox="0 0 14 14"><path d="M7 1.6 L8.7 5.3 L12.6 5.8 L9.7 8.5 L10.5 12.4 L7 10.4 L3.5 12.4 L4.3 8.5 L1.4 5.8 L5.3 5.3 Z" fill="none" stroke="currentColor" stroke-width="0.95"/></svg></span></td><td class="ce"><span class="mb act"><svg class="ic gr" viewBox="0 0 14 14"><path d="M1.3 7.3 L3 5.6 L5.3 7.9 L11 2.2 L12.7 3.9 L5.3 11.3 Z" fill="currentColor"/></svg></span></td><td class="ce dn"><svg class="ic gr big" viewBox="0 0 14 14"><path d="M1.3 7.3 L3 5.6 L5.3 7.9 L11 2.2 L12.7 3.9 L5.3 11.3 Z" fill="currentColor"/></svg></td><td class="ce c11"><span class="mb act"><svg class="ic gr" viewBox="0 0 14 14"><path d="M1.3 7.3 L3 5.6 L5.3 7.9 L11 2.2 L12.7 3.9 L5.3 11.3 Z" fill="currentColor"/></svg></span></td><td class="ce">3</td></tr>
<tr><td class="c1"><span class="hd"><i></i><i></i><i></i></span></td><td class="c2"><span class="cb"></span></td><td><a>Fiat 600</a></td><td>Vendo fiat 600 color amarillo!! Vendo fiat 600</td><td></td><td>gaston@pampascode.com.ar</td><td>Autos</td><td class="ce"><span class="mb"><svg class="ic dk" viewBox="0 0 14 14"><path d="M7 1.6 L8.7 5.3 L12.6 5.8 L9.7 8.5 L10.5 12.4 L7 10.4 L3.5 12.4 L4.3 8.5 L1.4 5.8 L5.3 5.3 Z" fill="none" stroke="currentColor" stroke-width="0.95"/></svg></span></td><td class="ce"><span class="mb act"><svg class="ic gr" viewBox="0 0 14 14"><path d="M1.3 7.3 L3 5.6 L5.3 7.9 L11 2.2 L12.7 3.9 L5.3 11.3 Z" fill="currentColor"/></svg></span></td><td class="ce dn"><svg class="ic gr big" viewBox="0 0 14 14"><path d="M1.3 7.3 L3 5.6 L5.3 7.9 L11 2.2 L12.7 3.9 L5.3 11.3 Z" fill="currentColor"/></svg></td><td class="ce c11"><span class="mb act"><svg class="ic gr" viewBox="0 0 14 14"><path d="M1.3 7.3 L3 5.6 L5.3 7.9 L11 2.2 L12.7 3.9 L5.3 11.3 Z" fill="currentColor"/></svg></span></td><td class="ce">2</td></tr>
</tbody>
</table>
<div id="st">
<svg style="position:absolute;left:4.5px;top:9.5px;width:11px;height:11px" viewBox="0 0 11 11"><path d="M5.8 2.4 H0.9 V10.1 H8.6 V5.6" fill="none" stroke="#5a5a5a" stroke-width="1.5"/><path d="M6.3 0.3 H10.7 V4.7 L9.2 3.2 L5.6 6.8 L4.2 5.4 L7.8 1.8 Z" fill="#5a5a5a"/></svg>
<span style="left:21px">Ver sitio</span>
<span class="bd" style="left:74px">0</span><span style="left:101px;letter-spacing:.15px">Visitantes</span>
<span class="bd" style="left:160px">1</span><span style="left:187px;letter-spacing:.23px">Administrador</span>
<svg style="position:absolute;left:269px;top:10px;width:12px;height:9px;color:#626262" viewBox="0 0 14 10"><path d="M0 0.4 H14 L7 6 Z M0 2 L4.4 5.4 L0 9.6 Z M14 2 L9.6 5.4 L14 9.6 Z M1 10 L5.4 6.2 L7 7.4 L8.6 6.2 L13 10 Z" fill="currentColor"/></svg>
<span class="bd" style="left:286px">0</span>
<span style="left:315px;top:13px;width:12px;height:3px;background:#5c5c5c"></span>
<span style="left:332.5px;letter-spacing:.18px">Desconectar</span>
<span style="right:10px;letter-spacing:.09px">Joomla! 3.6.2 &nbsp;—&nbsp; © 2016 Cadena Ser Argentina</span>
</div>
</div>
<div id="sb"><svg viewBox="0 0 8 7" style="top:3.3px"><path d="M0.3 4.4 L4 0.4 L7.7 4.4 L7.7 6.8 L4 3.2 L0.3 6.8 Z" fill="#4f4f4f"/></svg><div class="th"></div><svg viewBox="0 0 8 7" style="top:957.6px"><path d="M0.3 2.6 L4 6.6 L7.7 2.6 L7.7 0.2 L4 3.8 L0.3 0.2 Z" fill="#4f4f4f"/></svg></div>
</body>
</html>
